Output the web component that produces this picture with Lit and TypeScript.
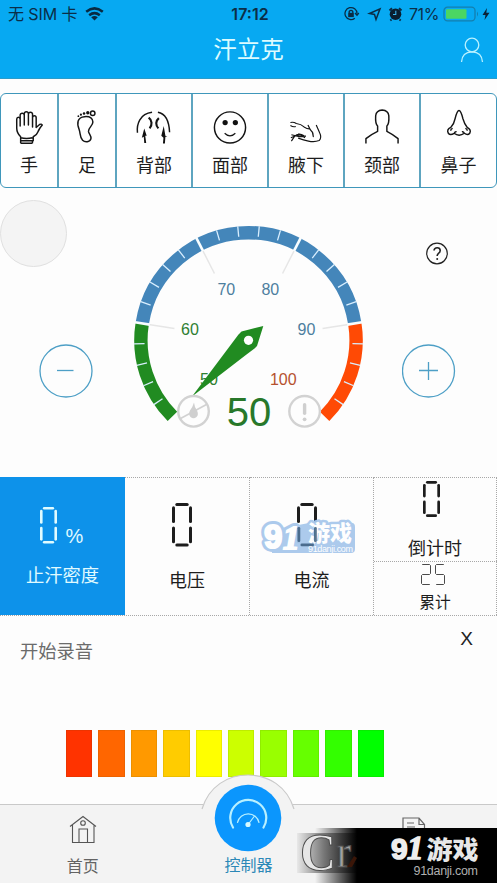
import { LitElement, html, svg, css } from "lit";
import { customElement, property } from "lit/decorators.js";

const CJK = css`"Liberation Sans", "Noto Sans CJK SC", sans-serif`;

/** Lit segments per digit, in the order a b c d e f g. */
const SEGMENTS: Record<string, string> = {
  "0": "abcdef", "1": "bc", "2": "abdeg", "3": "abcdg", "4": "bcfg",
  "5": "acdfg", "6": "acdefg", "7": "abc", "8": "abcdefg", "9": "abcdfg",
};

@customElement("segment-display")
export class SegmentDisplay extends LitElement {
  static properties = {
    value: { type: String },
    w: { type: Number },
    h: { type: Number },
    t: { type: Number },
  };
  declare value: string;
  declare w: number;
  declare h: number;
  declare t: number;

  static styles = css`
    :host { display: inline-flex; gap: 4px; line-height: 0; }
    .seg { stroke: currentColor; stroke-linecap: round; }
  `;

  private line(s: string) {
    const o = this.t / 2;
    const r = this.w - o;
    const m = this.h / 2;
    const b = this.h - o;
    const g = this.t * 1.1;
    const c: Record<string, number[]> = {
      a: [o + g, o, r - g, o], b: [r, o + g, r, m - g], c: [r, m + g, r, b - g],
      d: [o + g, b, r - g, b], e: [o, m + g, o, b - g], f: [o, o + g, o, m - g],
      g: [o + g, m, r - g, m],
    };
    const [x1, y1, x2, y2] = c[s];
    return svg`<line class="seg" x1=${x1} y1=${y1} x2=${x2} y2=${y2} stroke-width=${this.t}></line>`;
  }

  render() {
    return [...this.value].map(
      (d) => html`<svg width=${this.w} height=${this.h} role="img" aria-label=${d}>
        ${[...SEGMENTS[d]].map((s) => this.line(s))}
      </svg>`
    );
  }
}

@customElement("dial-gauge")
export class DialGauge extends LitElement {
  @property({ type: Number }) value = 50;

  static styles = css`
    :host { display: block; line-height: 0; }
    .green { stroke: #218b21; }
    .blue { stroke: #4486ba; }
    .red { stroke: #ff4a05; }
    .arc { fill: none; stroke-width: 13.4; }
    .guide { stroke: #e6e6e6; stroke-width: 1.5; }
    .major { stroke: #f8fdff; stroke-width: 2.6; }
    .minor { stroke: #d9efff; stroke-width: 1.3; }
    .label { font: 16px ${CJK}; text-anchor: middle; }
    .value { font: 40px ${CJK}; text-anchor: middle; fill: #28782a; }
    .lg { fill: #2f7f32; } .lb { fill: #4d7f9f; } .lr { fill: #b5512f; }
    .needle { fill: #218b21; }
    .hub { fill: #fff; }
    .ring { fill: none; stroke: #d2d2d2; stroke-width: 2.4; }
    .mark { fill: #cfcfcf; }
    .slash { stroke: #d2d2d2; stroke-width: 1.6; }
  `;

  private pt(v: number, r: number): [number, number] {
    const a = ((225 - (v - 50) * 5.4) * Math.PI) / 180;
    return [248.5 + r * Math.cos(a), 340.3 - r * Math.sin(a)];
  }

  private arc(from: number, to: number, cls: string) {
    const r = 107.6;
    const [x1, y1] = this.pt(from, r);
    const [x2, y2] = this.pt(to, r);
    return svg`<path class="arc ${cls}" d="M${x1} ${y1}A${r} ${r} 0 0 1 ${x2} ${y2}"></path>`;
  }

  private tick(v: number, r1: number, r2: number, cls: string) {
    const [x1, y1] = this.pt(v, r1);
    const [x2, y2] = this.pt(v, r2);
    return svg`<line class=${cls} x1=${x1} y1=${y1} x2=${x2} y2=${y2}></line>`;
  }

  render() {
    const majors = [60, 70, 80, 90];
    const minors = Array.from({ length: 24 }, (_, i) => 52 + i * 2).filter((v) => v % 10);
    const labels: [number, number, number, string][] = [
      [50, 209, 385, "lg"], [60, 190, 335, "lg"], [70, 226.3, 295, "lb"],
      [80, 270.3, 295, "lb"], [90, 306.5, 335, "lb"], [100, 283.3, 385, "lr"],
    ];
    return html`<svg width="233" height="289" viewBox="132 188 233 289">
      ${this.arc(50, 60, "green")}${this.arc(60, 90, "blue")}${this.arc(90, 100, "red")}
      ${majors.map((v) => this.tick(v, 75, 101, "guide"))}
      ${majors.map((v) => this.tick(v, 100, 115, "major"))}
      ${minors.map((v) => this.tick(v, 104, 114.5, "minor"))}
      ${labels.map(([v, x, y, c]) => svg`<text class="label ${c}" x=${x} y=${y}>${v}</text>`)}
      <path class="needle" d="M263.3 326L241.5 331.5L238.5 334.5L192 396.5L246.5 354.5L254.5 348.5L257 346Z"></path>
      <circle class="hub" cx="248.5" cy="340.3" r="4.6"></circle>
      <circle class="ring" cx="193.5" cy="411.3" r="15.3"></circle>
      <path class="slash" d="M180.5 418.5L206.5 404.5"></path>
      <path class="mark" d="M194 402.5q.5 5 3 8q2 4-.5 6.5q-3 2.5-6 0q-2.5-3-.5-6.5q2.5-3 4-8z"></path>
      <circle class="ring" cx="304.6" cy="411.3" r="15.3"></circle>
      <rect class="mark" x="302.9" y="403" width="3.4" height="12" rx="1.7"></rect>
      <circle class="mark" cx="304.6" cy="419.3" r="1.9"></circle>
      <text class="value" x="249" y="426.3">${this.value}</text>
    </svg>`;
  }
}

const partIcons = {
  hand: svg`<path d="M20 39V35C17.500 32.500 16 30 16 26V17q.2-2 1.700-2t1.800 2v7V13q.2-2 2.100-2t2.100 2V23V11.500q.2-2 2.100-2t2.100 2V23V12q.2-2 2.100-2t2.100 2V25V15.500q.2-2 1.900-2t1.800 2V25.500l3.500-3q2-1 2.700.5q-2.700 3-4.200 6.500q-1.500 4-5 5.500v4z M20 36q6 1.500 12 0 M20 41.500H32M20 39v2.500M32 39v2.500" />`,
  foot: svg`<path d="M26 14.500c6-.5 8.500 2 8.500 5.500c0 4-5 6-4.500 9.500c.5 3 3 4 2.500 7.500c-1 3.500-6 4-8.500 1.500c-3-3-2-7-3.500-11c-2.500-6-2-12.500 5.500-13z"/><circle cx="34.300" cy="11" r="2.300"/><g class="solid"><circle cx="29.300" cy="10.500" r="1.700"/><circle cx="25.500" cy="11.200" r="1.300"/><circle cx="22.300" cy="12.500" r="1.100"/><circle cx="19.700" cy="14" r=".9"/></g>`,
  back: svg`<path d="M13 31C12 22 15.500 11.500 28 10M34 10C42.500 11.500 45.500 20 46 30.500"/><path stroke-width="2.200" d="M24.500 15.500C28 18 28.500 23 25.500 26.500M35 16C31.500 19 31.500 23 34.500 26.500"/><path class="solid" d="M20 26.500l2.500 7.500h-1.500l1 7.500h-2l-.5-6.500l-2 1zM40 24l1.700 10l2 1l-2 0l-.5 7h-2l.5-6l-2.200-2z"/>`,
  face: svg`<circle cx="30" cy="25.500" r="16"/><g class="solid"><circle cx="25" cy="20.500" r="2.700"/><circle cx="35.500" cy="20.500" r="2.700"/></g><path d="M24.500 31.500q5.500 5.500 11 0" stroke-width="1.200"/>`,
  arm: svg`<g stroke-width="1.200"><path d="M14 20.500q3-1 6 1q5 .5 8 3.500q3 2 5.500 2M14 23.500q3 2 5.500 1M32 23q2 5 5 8l.5 4l-1-5M40.500 23l3.500 8q2.500 5-.5 8q-5 2-11 .5q-5-1-10.500-3M28 34q-6-3.500-10 1l-3 4.500M15 33l8 2l7-.500M14.500 36q4-2.500 9-2.500M22 32l7 4"/></g>`,
  neck: svg`<path d="M13.500 42V37Q19 32.500 25.500 29.500V24Q23 22 23.500 13.500Q24 8 30.200 7.500Q36.500 8 37 13.500Q37.500 22 35 24V29.500Q41 32.500 46.500 37V42"/>`,
  nose: svg`<path d="M26 16.500Q28 8 30 8T34 16.500Q35.500 22 38.500 25.500Q43 28 41 31.500Q39 34 35.500 31.500Q30 35.500 25 31.500Q21 34 19 31.500Q17 27.500 21.500 25.500Q25 22 26 16.500M21.500 29q0-2 2-2.500M38.500 29q0-2-2-2.500M25 31.500q1-2 2.500-1.500M35.500 31.500q-1-2-2.500-1.500"/>`,
};

const bodyParts = [
  { name: "手", icon: partIcons.hand, box: "0 0 57 46" },
  { name: "足", icon: partIcons.foot, box: "0 0 57 46" },
  { name: "背部", icon: partIcons.back, box: "-8 0 76 46" },
  { name: "面部", icon: partIcons.face, box: "-8 0 76 46" },
  { name: "腋下", icon: partIcons.arm, box: "-8 0 76 46" },
  { name: "颈部", icon: partIcons.neck, box: "-8 0 76 46" },
  { name: "鼻子", icon: partIcons.nose, box: "-8 0 76 46" },
];

const levels = ["#ff3300", "#ff6600", "#ff9900", "#ffcc00", "#ffff00", "#ccff00", "#99ff00", "#66ff00", "#33ff00", "#00ff00"];

@customElement("app-root")
export class AppRoot extends LitElement {
  static styles = css`
    :host {
      display: flex; flex-direction: column; position: relative; width: 497px; height: 883px;
      overflow: hidden; background: #fdfdfd; color: #1d1d1d; font: 18px/1 ${CJK};
    }
    * { box-sizing: border-box; }
    svg { display: block; }

    .header { height: 79px; background: #07a9f2; flex: none; border-bottom: 1px solid #2b9ccb; }
    .status { display: grid; grid-template-columns: 1fr auto 1fr; align-items: center; height: 28px; padding: 0 6px 0 8px; color: #0b2e48; font: 16px/20px Inter, "Noto Sans CJK SC", sans-serif; }
    .carrier { display: flex; align-items: center; gap: 8px; }
    .carrier-name { letter-spacing: -0.1px; }
    .clock { font-weight: 600; padding-left: 1px; }
    .indicators { display: flex; align-items: center; justify-content: flex-end; }
    .percent { margin-right: 4px; letter-spacing: -0.4px; }
    .titlebar { display: grid; grid-template-columns: 1fr auto 1fr; align-items: center; height: 43px; color: #dcfbff; padding: 0 13px; }
    .title { font-size: 23.5px; line-height: 30px; }
    .user { justify-self: end; }

    .parts { display: flex; height: 95px; margin-top: 14px; flex: none; border: 1.5px solid #3f97bb; border-radius: 6px; background: #fff; }
    .part { display: flex; flex-direction: column; align-items: center; padding-top: 8px; border-left: 2px solid #5ea5c0; }
    .part:first-child { border-left: 0; }
    .part.last { flex: 1; }
    .part-icon { fill: none; stroke: #151515; stroke-width: 1.5; stroke-linejoin: round; }
    .part-icon .solid { fill: #111; stroke: none; }
    .part-name { margin-top: 9px; line-height: 18px; }

    .stage { display: grid; grid-template-columns: 132px 233px 132px; height: 289px; flex: none; }
    .side { display: flex; flex-direction: column; }
    .side.left { align-items: center; padding-top: 156px; }
    .side.right { padding: 54px 0 0 37px; gap: 79px; }
    .help { margin-left: 24px; }
    .bubble { position: absolute; left: 0; top: 200px; width: 67px; height: 67px; border-radius: 50%; background: #f4f4f4; border: 1px solid #e0e0e0; }

    .metrics { display: grid; grid-template-columns: 125px 125px 124px 123px; height: 139px; flex: none; border-bottom: 1px dotted #a8a8a8; }
    .metric { display: flex; flex-direction: column; align-items: center; border-top: 1px dotted #a8a8a8; border-right: 1px dotted #a8a8a8; }
    .metric.plain { padding: 25px 0 0; }
    .metric.plain segment-display { margin-right: 10px; }
    .metric.plain .caption { margin-top: 25px; }
    .metric.active { background: #0d92ea; color: #e0fbff; border: 0; padding-top: 30px; }
    .reading { display: flex; align-items: flex-end; gap: 9px; margin-right: 2px; }
    .unit { font-size: 20px; line-height: 16px; }
    .metric.active .caption { margin-top: 23px; font-size: 18.3px; }
    .caption { line-height: 18px; }
    .stack { display: grid; grid-template-rows: 84px 1fr; }
    .time { padding-top: 3px; }
    .time segment-display { margin-right: 7px; }
    .time .caption { margin-top: 23px; }
    .total { padding-top: 2px; }
    .total segment-display { color: #4a4a4a; margin-right: 4px; }
    .total .caption { font-size: 15.8px; margin-top: 9px; }

    .recorder { flex: 1; }
    .recorder-head { display: flex; justify-content: space-between; padding: 13px 24px 0 20px; color: #6b6b6b; }
    .recorder-title { font-size: 18.3px; margin-top: 14px; }
    .close { color: #222; font-size: 19px; }
    .levels { display: flex; gap: 6px; padding-left: 66px; margin-top: 69px; }
    .level { width: 26.4px; height: 47px; box-shadow: inset 0 0 0 1px rgba(70, 70, 0, 0.1); }

    .tabs { position: relative; display: grid; grid-template-columns: repeat(3, 1fr); height: 79px; flex: none; background: #f3f3f3; border-top: 1px solid #c9c9c9; font-size: 16px; color: #636363; }
    .tab { display: flex; flex-direction: column; align-items: center; padding-top: 10px; }
    .tab-name { margin-top: 15px; }
    .tab.current { margin-top: -31px; padding-top: 0; color: #2c88b7; }
    .tab.current .tab-name { margin-top: 0; }

    .stamp { position: absolute; left: 257px; top: 512px; overflow: visible; }
    .brand { position: absolute; left: 297px; top: 828px; overflow: visible; }
    .heavy { font: 900 22px "Noto Sans CJK SC", sans-serif; }
    .heavy.large { font-size: 25px; }
    .site { font-family: "Liberation Sans", sans-serif; }
    .nine { font: 700 33px "Liberation Sans", sans-serif; }
    .nine.small { font-size: 30px; }
    .one { font: italic 700 33px "Liberation Serif", serif; }
    .crest { font: 700 52px "Liberation Serif", serif; fill: #e6e6e6; stroke: #4c4c4c; stroke-width: 1; }
    .crest-small { font-size: 46px; font-weight: 400; fill: #a0a0a0; }
    .halo { fill: #fff; stroke: #a8c8ec; paint-order: stroke; stroke-linejoin: round; }
  `;

  render() {
    return html`
      <header class="header">
        <div class="status">
          <div class="carrier">
            <span class="carrier-name">无 SIM 卡</span>
            <svg width="19" height="14" viewBox="0 0 19 14" fill="none" stroke="#082a42" stroke-width="2.5">
              <path d="M1.2 4.8Q9.5-2 17.8 4.8M4.2 8.2Q9.5 4 14.8 8.2"></path>
              <path fill="#082a42" stroke="none" d="M9.5 13.5L6.2 10.2Q9.5 7.9 12.8 10.2Z"></path>
            </svg>
          </div>
          <span class="clock">17:12</span>
          <div class="indicators">
            <svg width="65" height="16" viewBox="1 0 65 16" fill="none" stroke="#0a2c45" stroke-width="1.3">
              <path d="M11.8 12.2A6 6 0 1 1 14 7.5M12 7l2 2.3l1.8-2.3"></path>
              <path d="M6.2 7V5.5q1.8-2.3 3.600 0V7"></path>
              <rect x="5.2" y="6.8" width="5.6" height="4.3" fill="#0a2c45" stroke="none"></rect>
              <path stroke-width="1.5" d="M26.5 7.5L37 2.8L33 13.5L31.5 8.500Z"></path>
              <circle cx="52.5" cy="8.2" r="5.8" fill="#0a1e30" stroke="none"></circle>
              <path stroke-width="2" d="M46.5 4.5l2.5-2.3M58.5 4.5l-2.5-2.3M48.5 13.5l-1.200 1M56.5 13.5l1.2 1"></path>
              <path stroke="#3bb5ee" stroke-width="1.1" d="M52.8 4.8V8.5H50"></path>
            </svg>
            <span class="percent">71%</span>
            <svg width="48" height="16" viewBox="0 0 48 16">
              <rect x="1" y="1.2" width="31" height="13.6" rx="3.5" fill="none" stroke="#147fae" stroke-width="1.3"></rect>
              <rect x="3" y="3.2" width="20.5" height="9.6" rx="1" fill="#4bd663"></rect>
              <path d="M34 5.5q2 2.5 0 5z" fill="#147fae"></path>
              <path d="M44 2L39.5 9H42.5L41.5 14L46.5 6.8H43.3Z" fill="#0a2237"></path>
            </svg>
          </div>
        </div>
        <div class="titlebar">
          <span></span>
          <span class="title">汗立克</span>
          <svg class="user" width="24" height="26" viewBox="0 0 24 26" fill="none" stroke="#b9f1ff" stroke-width="1.3">
            <circle cx="12" cy="8" r="6.8"></circle>
            <path d="M1.5 25Q2 15 12 14.8Q22 15 22.5 25"></path>
          </svg>
        </div>
      </header>

      <nav class="parts">
        ${bodyParts.map(
          (p, i) => html`<div class="part ${i === bodyParts.length - 1 ? "last" : ""}">
            <svg class="part-icon" width=${i < 2 ? 56 : 74} height="46" viewBox=${p.box}>${p.icon}</svg>
            <span class="part-name">${p.name}</span>
          </div>`
        )}
      </nav>

      <section class="stage">
        <div class="side left">
          <svg width="54" height="54" viewBox="0 0 54 54" fill="none" stroke="#4d9fc6" stroke-width="1.3">
            <circle cx="27" cy="27" r="26"></circle><path d="M18 26.5H34.5"></path>
          </svg>
        </div>
        <dial-gauge .value=${50}></dial-gauge>
        <div class="side right">
          <svg class="help" width="23" height="23" viewBox="0 0 23 23" fill="none" stroke="#222" stroke-width="1.2">
            <circle cx="11" cy="11.5" r="10.3"></circle>
            <path stroke-width="1.6" d="M8 8.500q.3-2.800 3.200-2.800t3 2.700q0 1.700-1.700 2.900q-1.300 1-1.300 2.700"></path>
            <circle cx="11.2" cy="17" r="1" fill="#222" stroke="none"></circle>
          </svg>
          <svg width="54" height="54" viewBox="0 0 54 54" fill="none" stroke="#4d9fc6" stroke-width="1.3">
            <circle cx="26.5" cy="27" r="26"></circle><path d="M17 26.5H36M26.5 18V36"></path>
          </svg>
        </div>
      </section>
      <div class="bubble"></div>

      <section class="metrics">
        <div class="metric active">
          <div class="reading">
            <segment-display value="0" .w=${17} .h=${36.5} .t=${2.6}></segment-display>
            <span class="unit">%</span>
          </div>
          <span class="caption">止汗密度</span>
        </div>
        ${["电压", "电流"].map(
          (name) => html`<div class="metric plain">
            <segment-display value="0" .w=${20} .h=${43.5} .t=${3}></segment-display>
            <span class="caption">${name}</span>
          </div>`
        )}
        <div class="stack">
          <div class="metric time">
            <segment-display value="0" .w=${17} .h=${36} .t=${2.7}></segment-display>
            <span class="caption">倒计时</span>
          </div>
          <div class="metric total">
            <segment-display value="25" .w=${10} .h=${21} .t=${1}></segment-display>
            <span class="caption">累计</span>
          </div>
        </div>
      </section>

      <section class="recorder">
        <div class="recorder-head">
          <span class="recorder-title">开始录音</span><span class="close">X</span>
        </div>
        <div class="levels">
          ${levels.map((c) => html`<div class="level" style="background:${c}"></div>`)}
        </div>
      </section>

      <nav class="tabs">
        <div class="tab">
          <svg width="28" height="29" viewBox="0 0 28 29" fill="none" stroke="#555" stroke-width="1.1">
            <path d="M1 11.5L14 1.5L27 11.5M3.5 10V27.5H25V10M10 27.5V14H18.5V27.5"></path>
            <circle cx="14" cy="8" r="2.3"></circle>
          </svg>
          <span class="tab-name">首页</span>
        </div>
        <div class="tab current">
          <svg width="94" height="84" viewBox="0 0 94 84">
            <path d="M1 35C8 12 27 1 47 1S86 12 93 35L88 70H6Z" fill="#f3f3f3"></path>
            <path d="M1 35C8 12 27 1 47 1S86 12 93 35" fill="none" stroke="#c9c9c9" stroke-width="1.2"></path>
            <circle cx="47" cy="44" r="33.3" fill="#0b96fd"></circle>
            <g fill="none" stroke="#b8f0ff" stroke-linecap="round">
              <path stroke-width="2.2" d="M32 53.5A18 18 0 1 1 62.5 53.5"></path>
              <path stroke-width="1.2" d="M36.5 48.5A11 11 0 0 1 58 48.5M47.5 50L53.5 42"></path>
            </g>
            <circle cx="47" cy="50.5" r="2.6" fill="#d8faff"></circle>
          </svg>
          <span class="tab-name">控制器</span>
        </div>
        <div class="tab">
          <svg width="24" height="29" viewBox="0 0 24 29" fill="none" stroke="#666" stroke-width="1.2">
            <path d="M1 28V3H17L22.5 9.5V28M17 3V9.5H22.5M5 8H12M5 12H13"></path>
          </svg>
        </div>
      </nav>

      <svg class="stamp" width="104" height="48" viewBox="257 512 104 48" opacity="0.95">
        <path d="M309 523H352q3 0 3 4v22q0 4-4 4H272V530z" fill="#a8c8ec"></path>
        <g class="halo" stroke-width="8">
          <text y="548"><tspan class="nine" x="264">9</tspan><tspan class="one" x="283" dy="1">1</tspan></text>
        </g>
        <text class="halo heavy" x="308" y="540.5" stroke-width="5">游戏</text>
        <text y="548" fill="#fff" stroke="#fff" stroke-width="2" aria-hidden="true"><tspan class="nine" x="264">9</tspan><tspan class="one" x="283" dy="1">1</tspan></text>
        <g fill="#3f6386" opacity="0.85"><rect x="297.5" y="527" width="2.8" height="15" rx="1.3"></rect><rect x="314" y="527" width="2.8" height="15" rx="1.3"></rect><rect x="300.5" y="543.5" width="13.5" height="2.8" rx="1.3"></rect></g>
        <text class="site" x="308" y="551.5" font-size="9" fill="#fff" textLength="45">91danji.com</text>
      </svg>

      <svg class="brand" width="200" height="55" viewBox="297 828 200 55">
        <defs>
          <linearGradient id="fade"><stop offset="0" stop-opacity="0"></stop><stop offset="0.23" stop-opacity="1"></stop></linearGradient>
          <linearGradient id="plate"><stop offset="0" stop-color="#e8e8e8"></stop><stop offset="0.45" stop-color="#777"></stop><stop offset="1" stop-color="#000"></stop></linearGradient>
        </defs>
        <rect x="315" y="828" width="182" height="55" fill="url(#fade)"></rect>
        <rect x="297" y="833" width="60" height="40" fill="url(#plate)"></rect>
        <path d="M347 867L354 856L357 858L352 867Z" fill="#3a1608"></path>
        <text class="crest" x="300" y="870" textLength="51" lengthAdjust="spacingAndGlyphs">C<tspan class="crest-small" dy="-3">r</tspan></text>
        <text y="859" fill="#eee" stroke="#eee" stroke-width="1.5"><tspan class="nine small" x="391">9</tspan><tspan class="one" x="407">1</tspan></text>
        <text class="heavy large" x="426.500" y="859" fill="#e8e8e8" textLength="52" lengthAdjust="spacingAndGlyphs">游戏</text>
        <text class="site" x="413.5" y="875" font-size="12.5" fill="#b0b0b0" textLength="64.5">91danji.com</text>
      </svg>
    `;
  }
}
